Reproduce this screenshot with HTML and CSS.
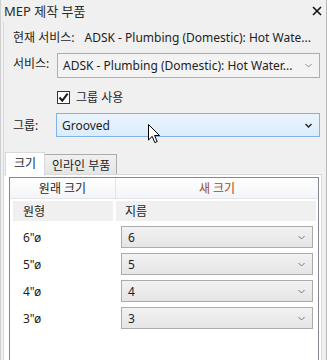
FILE: index.html
```html
<!DOCTYPE html>
<html lang="ko">
<head>
    <meta charset="UTF-8">
    <title>MEP 제작 부품</title>
    <link rel="stylesheet" href="styles.css">
</head>
<body>
    <div class="dialog">
        <div class="titlebar">
            <span class="title">MEP 제작 부품</span>
            <svg class="close" width="10" height="10" viewBox="0 0 10 10">
                <path d="M1 1 L9 9 M9 1 L1 9" stroke="#111" stroke-width="1.6" fill="none"/>
            </svg>
        </div>

        <div class="main">
            <div class="row current">
                <span class="label">현재 서비스:</span>
                <span class="value">ADSK - Plumbing (Domestic): Hot Wate...</span>
            </div>

            <div class="row">
                <span class="label short">서비스:</span>
                <div class="combo flat">
                    <span>ADSK - Plumbing (Domestic): Hot Water...</span>
                    <svg class="chev" width="7" height="5" viewBox="0 0 7 5"><path d="M0.5 1 L3.5 4 L6.5 1" stroke="#8a8a8a" fill="none"/></svg>
                </div>
            </div>

            <div class="row check">
                <span class="box">
                    <svg width="11" height="11" viewBox="0 0 11 11"><path d="M1.5 5.5 L4.3 8.6 L9.6 1.6" stroke="#1a1a1a" stroke-width="2" fill="none"/></svg>
                </span>
                <span>그룹 사용</span>
            </div>

            <div class="row group">
                <span class="label short">그룹:</span>
                <div class="combo hot">
                    <span>Grooved</span>
                    <svg class="chev" width="7" height="5" viewBox="0 0 7 5"><path d="M0.5 1 L3.5 4 L6.5 1" stroke="#222" stroke-width="1.4" fill="none"/></svg>
                </div>
            </div>

            <div class="tabs">
                <div class="tab active">크기</div>
                <div class="tab">인라인 부품</div>
            </div>

            <div class="panel">
                <div class="grid">
                    <div class="head">
                        <div class="hcell">원래 크기</div>
                        <div class="hcell new">새 크기</div>
                    </div>
                    <div class="sub">
                        <div class="scell first">원형</div>
                        <div class="scell">지름</div>
                    </div>
                    <div class="drow">
                        <div class="size">6"ø</div>
                        <div class="pick"><span>6</span><svg class="chev" width="7" height="5" viewBox="0 0 7 5"><path d="M0.5 1 L3.5 4 L6.5 1" stroke="#777" fill="none"/></svg></div>
                    </div>
                    <div class="drow">
                        <div class="size">5"ø</div>
                        <div class="pick"><span>5</span><svg class="chev" width="7" height="5" viewBox="0 0 7 5"><path d="M0.5 1 L3.5 4 L6.5 1" stroke="#777" fill="none"/></svg></div>
                    </div>
                    <div class="drow">
                        <div class="size">4"ø</div>
                        <div class="pick"><span>4</span><svg class="chev" width="7" height="5" viewBox="0 0 7 5"><path d="M0.5 1 L3.5 4 L6.5 1" stroke="#777" fill="none"/></svg></div>
                    </div>
                    <div class="drow">
                        <div class="size">3"ø</div>
                        <div class="pick"><span>3</span><svg class="chev" width="7" height="5" viewBox="0 0 7 5"><path d="M0.5 1 L3.5 4 L6.5 1" stroke="#777" fill="none"/></svg></div>
                    </div>
                </div>
            </div>
        </div>

        <!-- mouse pointer over the group combo -->
        <svg class="cursor" width="13" height="20" viewBox="0 0 13 20">
            <path d="M0.5 0.5 L0.5 16 L4.2 12.4 L6.8 18.6 L9.2 17.6 L6.6 11.5 L11.5 11.5 Z" fill="#fff" stroke="#000" stroke-width="1" stroke-linejoin="miter"/>
        </svg>
    </div>
</body>
</html>
```

FILE: styles.css
```css
* {
    box-sizing: border-box;
}
body {
    margin: 0;
    width: 327px;
    height: 360px;
    overflow: hidden;
    background-color: #f0f0f0;
    font-family: "Noto Sans", "Noto Sans CJK KR", sans-serif;
    font-size: 12px;
    color: #1e1e1e;
}
.dialog {
    position: relative;
    height: 360px;
    border-left: 1px solid #d0d0d0;
    border-right: 1px solid #b8b8b8;
}
.titlebar {
    height: 22px;
    display: flex;
    align-items: center;
    justify-content: space-between;
    padding: 0 4px 1px 3px;
}
.title {
    font-size: 13px;
    color: #2b2b2b;
}
.main {
    margin-left: 2px;
    height: 338px;
    border-left: 1px solid #dadada;
    display: flex;
    flex-direction: column;
}
.row {
    display: flex;
    align-items: center;
    padding-left: 9px;
}
.label {
    white-space: nowrap;
}
.label.short {
    width: 44px;
}
.current {
    height: 20px;
    margin-top: 5px;
}
.current .value {
    margin-left: 10px;
    white-space: nowrap;
}
.combo {
    width: 263px;
    height: 25px;
    margin-top: 6px;
    display: flex;
    align-items: center;
    justify-content: space-between;
    padding: 0 7px 0 5px;
    white-space: nowrap;
}
.combo.flat {
    background-color: #f3f3f3;
    border: 1px solid #adadad;
}
.combo.hot {
    height: 24px;
    margin-top: 0;
    margin-left: -1px;
    width: 264px;
    background: linear-gradient(#ebf4fc, #dcecfc);
    border: 1px solid #7eb4ea;
}
.check {
    height: 18px;
    margin-top: 10px;
    padding-left: 53px;
    gap: 6px;
}
.box {
    width: 13px;
    height: 13px;
    border: 1px solid #333;
    background-color: #fff;
    display: flex;
    align-items: center;
    justify-content: center;
}
.group {
    margin-top: 7px;
}
.tabs {
    display: flex;
    align-items: flex-end;
    margin-top: 15px;
    padding-left: 1px;
    height: 22px;
    position: relative;
    z-index: 1;
}
.tab {
    height: 20px;
    padding: 0 6px 0 7px;
    display: flex;
    align-items: center;
    border: 1px solid #acacac;
    border-bottom: none;
    background: linear-gradient(#f0f0f0, #e5e5e5);
    white-space: nowrap;
}
.tab.active {
    height: 24px;
    width: 40px;
    justify-content: center;
    margin-bottom: -2px;
    padding: 0 0 3px;
    background: #fff;
    border-color: #d9d9d9;
}
.tab + .tab {
    border-left: none;
}
.panel {
    margin-left: -1px;
    width: 319px;
    flex: 1;
    background-color: #fff;
    border: 1px solid #d9d9d9;
    border-bottom: none;
    padding: 2px 2px 0 5px;
}
.grid {
    height: 100%;
    border: 1px solid #828790;
    border-bottom: none;
    background-color: #fff;
}
.head {
    display: flex;
    height: 21px;
    background: linear-gradient(#ffffff, #f3f5f8);
    border-bottom: 1px solid #e2e4e8;
}
.hcell {
    display: flex;
    align-items: center;
    justify-content: center;
    width: 106px;
    border-right: 1px solid #e2e4e8;
}
.hcell.new {
    flex: 1;
    border-right: none;
    color: #9c4a22;
}
.sub {
    display: flex;
    gap: 3px;
    padding: 2px 2px 0 3px;
    height: 22px;
}
.scell {
    flex: 1;
    background-color: #f0f0f0;
    display: flex;
    align-items: center;
    padding-left: 9px;
}
.scell.first {
    flex: none;
    width: 100px;
    padding-left: 10px;
}
.drow {
    display: flex;
    align-items: center;
    height: 27px;
    padding-top: 5px;
}
.size {
    width: 111px;
    padding-left: 13px;
}
.pick {
    width: 192px;
    height: 22px;
    display: flex;
    align-items: center;
    justify-content: space-between;
    padding: 0 7px 0 6px;
    background: linear-gradient(#f2f2f2, #e5e5e5);
    border: 1px solid #acacac;
}
.cursor {
    position: absolute;
    left: 147px;
    top: 124px;
}
```
